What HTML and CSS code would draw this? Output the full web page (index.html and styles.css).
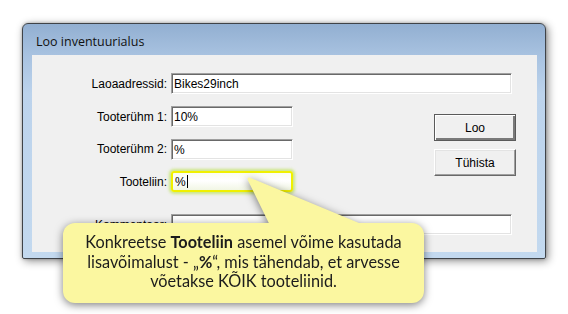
FILE: index.html
```html
<!DOCTYPE html>
<html lang="et">
<head>
  <meta charset="UTF-8">
  <meta name="viewport" content="width=device-width, initial-scale=1.0">
  <title>Loo inventuurialus</title>
  <link rel="stylesheet" href="styles.css">
</head>
<body>
  <div class="window">
    <div class="titlebar">Loo inventuurialus</div>
    <div class="client">
      <div class="row">
        <span class="label">Laoaadressid:</span>
        <div class="field wide">Bikes29inch</div>
      </div>
      <div class="middle">
        <div class="rows">
          <div class="row">
            <span class="label">Tooterühm 1:</span>
            <div class="field short">10%</div>
          </div>
          <div class="row">
            <span class="label">Tooterühm 2:</span>
            <div class="field short">%</div>
          </div>
          <div class="row">
            <span class="label">Tooteliin:</span>
            <div class="field short highlight">%<span class="caret"></span></div>
          </div>
        </div>
        <div class="buttons">
          <button class="btn default">Loo</button>
          <button class="btn">Tühista</button>
        </div>
      </div>
      <div class="row comment">
        <span class="label">Kommentaar:</span>
        <div class="field wide"></div>
      </div>
    </div>
  </div>

  <!-- callout over the dialog -->
  <div class="callout-layer">
    <svg class="callout-tail" width="130" height="60" viewBox="0 0 130 60">
      <polygon points="9,9 32,56 122,56" fill="#fbf7a0" stroke="#fbf7a0" stroke-width="3" stroke-linejoin="round"/>
    </svg>
    <div class="callout">
      Konkreetse <b>Tooteliin</b> asemel võime kasutada<br>
      lisavõimalust - „<b>%</b>“, mis tähendab, et arvesse<br>
      võetakse KÕIK tooteliinid.
    </div>
  </div>
</body>
</html>
```

FILE: styles.css
```css
/* Page */
body {
  margin: 0;
  padding: 23px 0 0 22px;
  width: 568px;
  height: 314px;
  box-sizing: border-box;
  overflow: hidden;
  position: relative;
  background: #fff;
  font-family: 'Liberation Sans', Arial, sans-serif;
  font-size: 12px;
  color: #000;
}

/* Window frame */
.window {
  width: 524px;
  height: 236px;
  box-sizing: border-box;
  border: 1px solid #3f4348;
  border-radius: 6px 6px 2px 2px;
  padding: 0 8px 7px 9px;
  background: linear-gradient(180deg, #92afd1 0%, #a9c3e1 14%, #bcd3ec 30%, #c3d9ef 100%);
  box-shadow: 2px 2px 8px rgba(0, 0, 0, 0.45), 0 0 3px rgba(0, 0, 0, 0.25);
}

.titlebar {
  height: 31px;
  box-sizing: border-box;
  padding: 9px 0 0 4px;
  font-family: 'Open Sans', 'Noto Sans', sans-serif;
  font-size: 12.5px;
  color: #111;
}

.client {
  height: 197px;
  box-sizing: border-box;
  padding-top: 18px;
  background: #f0f0f0;
}

/* Form rows */
.row {
  display: flex;
  align-items: center;
  height: 21px;
}

.label {
  width: 139px;
  box-sizing: border-box;
  padding-right: 4px;
  text-align: right;
  white-space: nowrap;
}

.middle {
  display: flex;
  margin-top: 12px;
}

.rows {
  display: flex;
  flex-direction: column;
  gap: 11.5px;
}

.comment {
  margin-top: 22px;
}

/* Sunken text fields */
.field {
  height: 21px;
  box-sizing: border-box;
  padding: 3px 0 0 2px;
  line-height: 14px;
  background: #fff;
  border: 1px solid;
  border-color: #a0a0a0 #fff #fff #a0a0a0;
  box-shadow: inset 1px 1px #696969, inset -1px -1px #e3e3e3;
  white-space: nowrap;
}

.wide {
  width: 341px;
}

.short {
  width: 122px;
}

.highlight {
  border: 2px solid #f0f000;
  border-radius: 3px;
  padding: 2px 0 0 2px;
  background: linear-gradient(180deg, #fbfdf0 0%, #fff 45%, #f1f6e4 100%);
  box-shadow: 0 0 3px 2px rgba(180, 225, 60, 0.6);
}

.caret {
  display: inline-block;
  width: 1px;
  height: 13px;
  margin-left: 1px;
  vertical-align: -2px;
  background: #000;
}

/* Buttons */
.buttons {
  display: flex;
  flex-direction: column;
  gap: 8px;
  margin: 8px 0 0 141px;
}

.btn {
  width: 82px;
  height: 27px;
  padding: 0;
  font-family: 'Liberation Sans', Arial, sans-serif;
  font-size: 12px;
  color: #000;
  background: #f0f0f0;
  border: 1px solid;
  border-color: #fff #696969 #696969 #fff;
  box-shadow: inset -1px -1px #a0a0a0, inset 1px 1px #e3e3e3;
}

.btn.default {
  border: 1px solid #5a5a5a;
  box-shadow: inset 1px 1px #fff, inset -2px -2px #7a7a7a;
}

/* Callout */
.callout-layer {
  position: absolute;
  top: 0;
  left: 0;
  width: 568px;
  height: 314px;
  pointer-events: none;
  filter: drop-shadow(0 2px 4px rgba(0, 0, 0, 0.5));
}

.callout-tail {
  position: absolute;
  left: 240px;
  top: 170px;
}

.callout {
  position: absolute;
  left: 63px;
  top: 223px;
  width: 361px;
  height: 80px;
  box-sizing: border-box;
  padding-top: 9px;
  border-radius: 12px;
  background: #fbf7a0;
  font-family: Lato, 'Open Sans', sans-serif;
  font-size: 16.3px;
  line-height: 19.5px;
  text-align: center;
  color: #1c1c1c;
}
```
